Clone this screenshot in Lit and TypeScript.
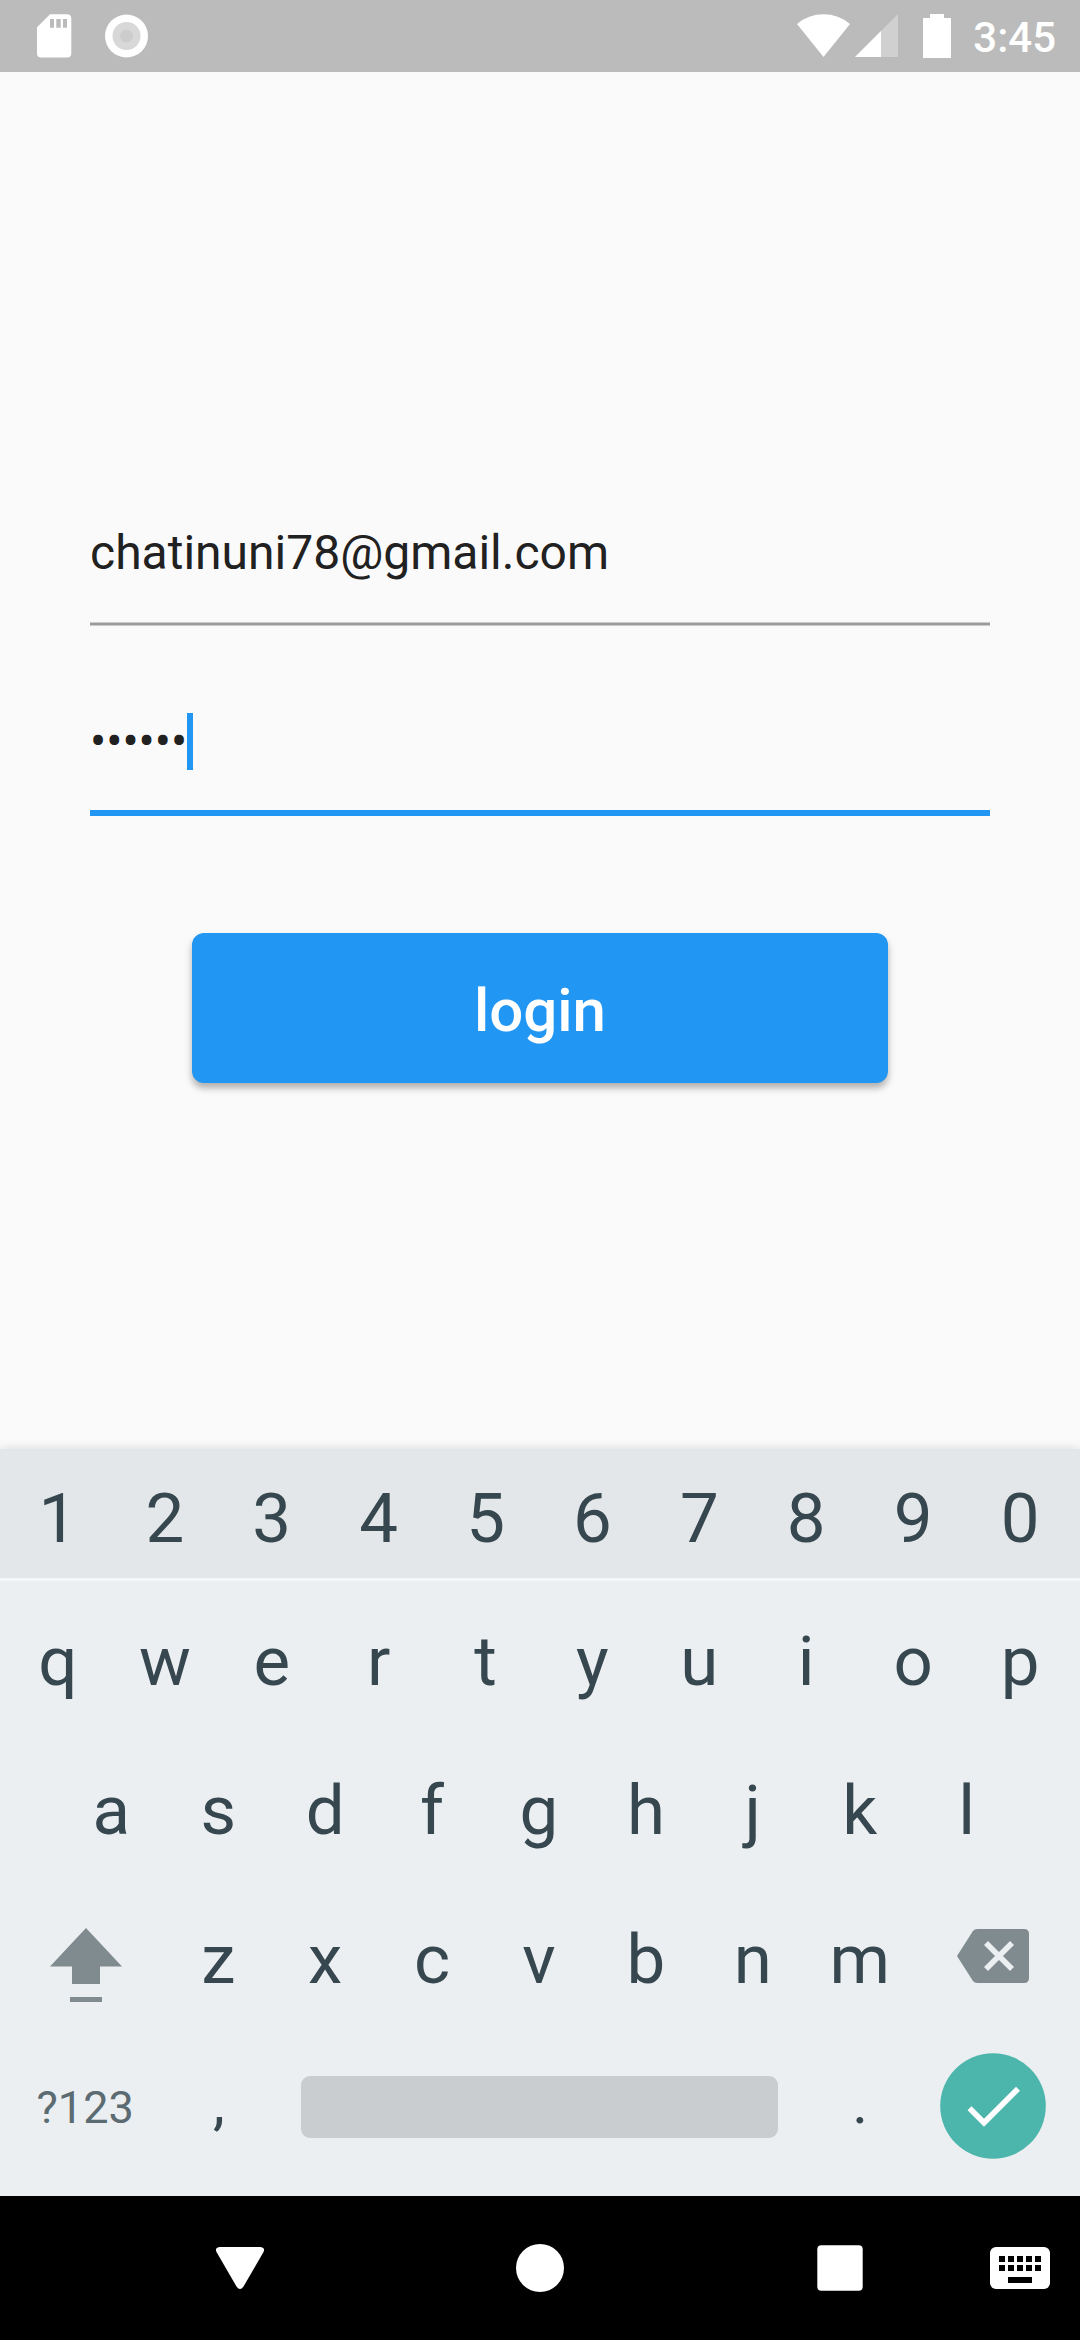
import { LitElement, html, css, svg } from "lit";
import { customElement, property } from "lit/decorators.js";

@customElement("status-bar")
class StatusBar extends LitElement {
  static styles = css`
    :host { display: flex; align-items: center; height: 72px; background: #bbbbbb; padding: 0 24px 0 37px; box-sizing: border-box; }
    svg { display: block; flex: none; }
    .left, .right { display: flex; align-items: center; }
    .left { gap: 33px; }
    .right { margin-left: auto; }
    .signal { margin-left: 5px; }
    .battery { margin-left: 25px; }
    .time { margin-left: 22px; font-size: 42px; font-weight: 500; line-height: 50px; color: #fff; padding-top: 3px; white-space: nowrap; }
  `;
  render() {
    return html`
      <div class="left">
        <svg width="35" height="44" viewBox="0 0 35 44">
          <path fill="#fff" fill-rule="evenodd" d="M13 .3H30Q34.3 .3 34.3 4.6V39.3Q34.3 43.6 30 43.6H4.3Q0 43.6 0 39.3V13.3ZM13 5V13.7H17V5ZM19.3 5V13.7H23.7V5ZM26 5V13.7H30V5Z"/>
        </svg>
        <svg width="44" height="44" viewBox="0 0 44 44">
          <circle cx="21.500" cy="22" r="21.500" fill="#fff"/><circle cx="21.500" cy="22" r="14" fill="#d8d8d8"/><circle cx="21.500" cy="22" r="6.500" fill="#cccccc"/>
        </svg>
      </div>
      <div class="right">
        <svg width="53" height="44" viewBox="0 0 53 44"><path fill="#fff" d="M0 10Q11.5 .3 26.5 .3T53 10L26.5 43Z"/></svg>
        <svg class="signal" width="43" height="44" viewBox="0 0 43 44"><path fill="#d0d0d0" d="M43 0V43H0Z"/><path fill="#fff" d="M26 17V43H0Z"/></svg>
        <svg class="battery" width="28" height="44" viewBox="0 0 28 44"><path fill="#fff" d="M7 0H21V4H28V44H0V4H7Z"/></svg>
        <div class="time">3:45</div>
      </div>`;
  }
}

@customElement("login-form")
class LoginForm extends LitElement {
  static styles = css`
    :host { display: flex; flex-direction: column; height: 1377px; padding: 435px 90px 0; box-sizing: border-box; background: #fafafa; color: #212121; }
    .field { display: flex; align-items: center; box-sizing: border-box; font-size: 48px; line-height: 56px; white-space: nowrap; }
    .email { height: 115px; padding-bottom: 24px; }
    .rule { height: 4px; box-sizing: border-box; background: #9b9b9b; border: solid #cacaca; border-width: 1px 0; }
    .password { height: 190px; padding-top: 47px; border-bottom: 6px solid #2196f3; }
    .caret { width: 6px; height: 57px; background: #2196f3; }
    .login { display: flex; justify-content: center; align-items: center; align-self: center; width: 696px; height: 150px; margin-top: 117px; padding: 5px 0 0; border: 0; border-radius: 12px; box-sizing: border-box; background: #2196f3; color: #fff; font: 500 60px/70px Roboto, sans-serif; box-shadow: 0 5px 7px rgba(0,0,0,.3); }
  `;
  render() {
    return html`
      <div class="field email">chatinuni78@gmail.com</div>
      <div class="rule"></div>
      <div class="field password"><span>••••••</span><span class="caret"></span></div>
      <button class="login"><span>login</span></button>`;
  }
}

const shiftIcon = svg`<svg class="shift" width="72" height="74" viewBox="0 0 72 74" fill="#808b8f"><path d="M36 0L72 38.5H50V56H22V38.5H0Z"/><path d="M20 69H52V74H20Z"/></svg>`;
const deleteIcon = svg`<svg class="delete" width="72" height="54" viewBox="0 0 72 54"><path fill="#808b8f" d="M0 27L15.800 2.300Q17.500 0 20.500 0H67Q72 0 72 5V49Q72 54 67 54H20.500Q17.500 54 15.800 51.700Z"/><path d="M29 14L55 40M55 14L29 40" stroke="#ebeff2" stroke-width="5.600"/></svg>`;
const enterIcon = svg`<svg class="enter" width="106" height="106" viewBox="0 0 106 106"><circle cx="53" cy="53" r="52.800" fill="#4db6ac"/><path d="M29.500 55.300L44 69.700L78 35.800" fill="none" stroke="#fff" stroke-width="5.600"/></svg>`;

@customElement("soft-keyboard")
class SoftKeyboard extends LitElement {
  @property({ attribute: false }) numbers = [..."1234567890"];
  @property({ attribute: false }) top = [..."qwertyuiop"];
  @property({ attribute: false }) home = [..."asdfghjkl"];
  @property({ attribute: false }) bottom = [..."zxcvbnm"];

  static styles = css`
    :host { display: block; height: 747px; box-sizing: border-box; background: #ebeff2; color: #37474f; box-shadow: 0 0 10px rgba(0,0,0,.14); font-size: 69px; line-height: 80px; clip-path: inset(-12px 0 0 0); }
    svg { display: block; }
    .row { display: grid; grid-template-columns: repeat(20, minmax(0, 1fr)); align-items: center; height: 148.670px; padding: 0 6.500px 0 4.500px; box-sizing: border-box; }
    .numbers { height: 132px; padding-top: 9px; background: #e3e7e9; border-bottom: 3px solid #f5f8fa; }
    .letters { padding-top: 6px; }
    .key { grid-column: span 2; display: flex; align-items: center; justify-content: center; padding-top: 2px; }
    .wide { grid-column: span 3; padding-top: 0; }
    .first { grid-column: 2 / span 2; }
    .symbols { font-size: 45px; color: #5b6b71; padding: 1px 0 0 1px; }
    .punct { font-size: 60px; padding: 0 0 9px 1px; }
    .space { grid-column: span 10; padding: 0 28.500px 0 29.500px; }
    .bar { flex: 1; height: 62px; border-radius: 9px; background: #c9cdd0; }
    .shift { margin: 13px 0 0 2px; }
    .delete { margin-bottom: 5px; }
    .enter { margin-bottom: 3px; }
  `;
  private keys(list: string[], offset = false) {
    return list.map((k, i) => html`<div class="key ${offset && i === 0 ? "first" : ""}">${k}</div>`);
  }
  render() {
    return html`
      <div class="row numbers">${this.keys(this.numbers)}</div>
      <div class="letters">
        <div class="row">${this.keys(this.top)}</div>
        <div class="row">${this.keys(this.home, true)}</div>
        <div class="row"><div class="key wide">${shiftIcon}</div>${this.keys(this.bottom)}<div class="key wide">${deleteIcon}</div></div>
        <div class="row">
          <div class="key wide symbols">?123</div>
          <div class="key punct">,</div>
          <div class="key space"><div class="bar"></div></div>
          <div class="key punct">.</div>
          <div class="key wide">${enterIcon}</div>
        </div>
      </div>`;
  }
}

@customElement("nav-bar")
class NavBar extends LitElement {
  static styles = css`
    :host { display: flex; align-items: center; height: 144px; padding: 0 30px 0 216px; box-sizing: border-box; background: #000; }
    svg { display: block; flex: none; }
    .home { margin-left: 252px; }
    .recent { margin-left: 253px; }
    .ime { margin-left: auto; }
  `;
  render() {
    const cols = [9, 18, 27, 36, 45];
    return html`
      <svg width="48" height="42" viewBox="0 0 48 42"><path fill="#fff" d="M3.500 0H44.500Q49.500 .5 47.500 5L27.500 39.500Q24 44.500 20.500 39.500L.5 5Q-1.500 .5 3.500 0Z"/></svg>
      <svg class="home" width="48" height="48" viewBox="0 0 48 48"><circle cx="24" cy="24" r="24" fill="#fff"/></svg>
      <svg class="recent" width="46" height="46" viewBox="0 0 46 46"><rect x=".3" y=".3" width="45.400" height="45.400" rx="4" fill="#fff"/></svg>
      <svg class="ime" width="60" height="42" viewBox="0 0 60 42">
        <rect width="60" height="42" rx="6" fill="#fff"/>
        ${cols.map((x) => svg`<rect x=${x} y="9" width="6" height="6"/><rect x=${x} y="18" width="6" height="6"/>`)}
        <rect x="18" y="30" width="24" height="6"/>
      </svg>`;
  }
}

@customElement("app-root")
class AppRoot extends LitElement {
  static styles = css`
    :host { display: flex; flex-direction: column; width: 1080px; height: 2340px; overflow: hidden; font-family: Roboto, "Liberation Sans", sans-serif; }
    status-bar, login-form, soft-keyboard, nav-bar { flex: none; }
  `;
  render() {
    return html`<status-bar></status-bar><login-form></login-form><soft-keyboard></soft-keyboard><nav-bar></nav-bar>`;
  }
}
